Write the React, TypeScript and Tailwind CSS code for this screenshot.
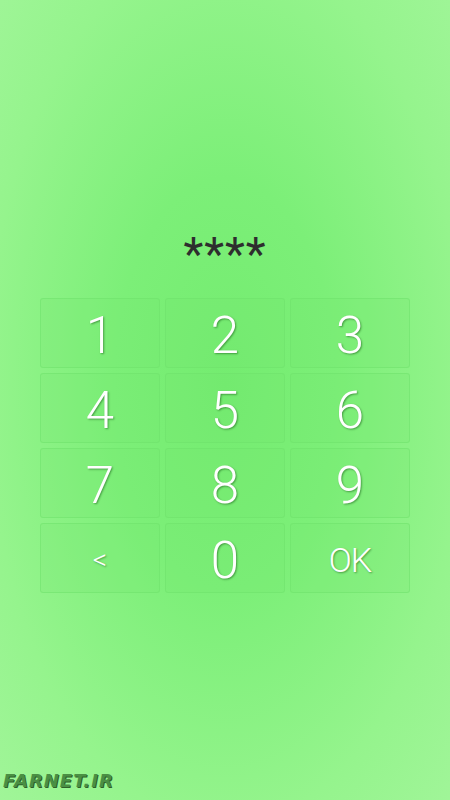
import React from 'react';

const KEYS = ['1', '2', '3', '4', '5', '6', '7', '8', '9', '<', '0', 'OK'];

export default function App() {
  return (
    <div
      className="relative w-[450px] h-[800px] overflow-hidden flex flex-col items-center bg-[radial-gradient(ellipse_at_50%_48%,#74ec70_0%,#7cef78_35%,#95f48d_75%,#a0f598_100%)]"
      style={{ fontFamily: 'Roboto, "Noto Sans", sans-serif' }}
    >
      <div className="mt-[224px] h-[60px] flex items-center justify-center text-[46px] leading-none text-[#2e2e2e] tracking-[1px]">
        ****
      </div>

      <div className="mt-[14px] grid grid-cols-[120px_120px_120px] grid-rows-[70px_70px_70px_70px] gap-x-[5px] gap-y-[5px]">
        {KEYS.map((k) => (
          <button
            key={k}
            className="flex items-center justify-center rounded-[3px] border border-[#6edf6a]/50 bg-[#72e86f]/20 text-white font-light leading-none [text-shadow:1px_1px_2px_rgba(0,60,0,0.45)]"
          >
            <span
              className={
                k === 'OK'
                  ? 'pt-[4px] text-[34px] tracking-[-1px]'
                  : k === '<'
                  ? 'pt-[4px] text-[28px]'
                  : 'pt-[4px] text-[51px]'
              }
            >
              {k}
            </span>
          </button>
        ))}
      </div>

      <div className="absolute left-[3px] bottom-[6px] text-[18px] font-black italic tracking-[1px] text-[#4a8f44] [text-shadow:1px_1px_0_#2e5f2a]" style={{ fontFamily: '"DejaVu Sans", sans-serif' }}>
        FARNET.IR
      </div>
    </div>
  );
}
